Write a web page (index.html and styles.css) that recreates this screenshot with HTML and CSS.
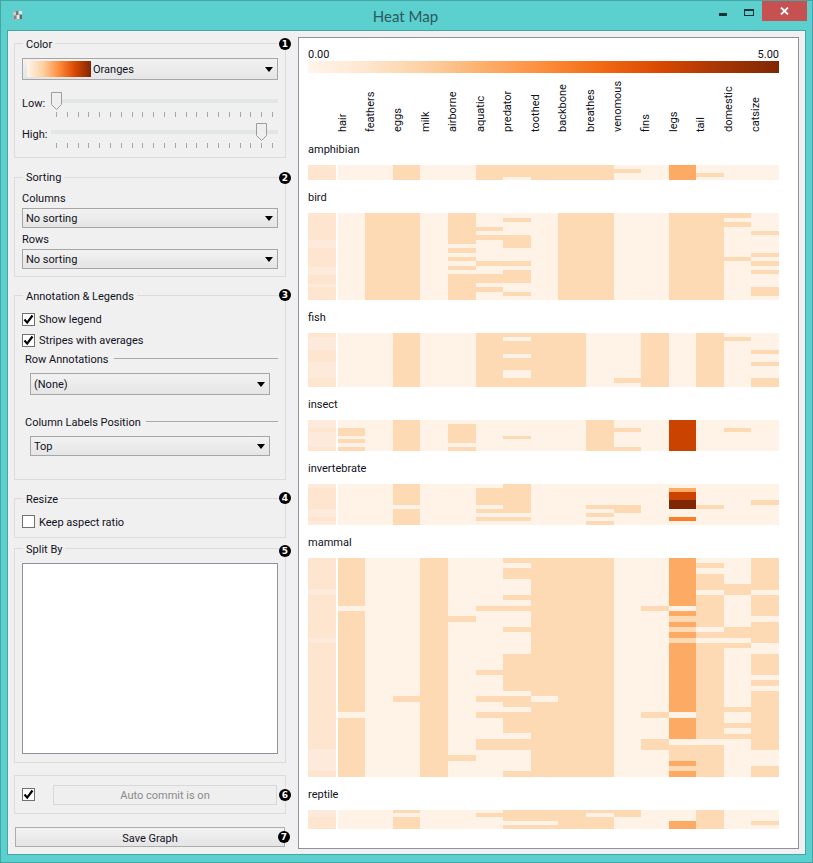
FILE: index.html
```html
<!DOCTYPE html>
<html lang="en">
<head>
<meta charset="utf-8">
<title>Heat Map</title>
<link rel="stylesheet" href="styles.css">
</head>
<body>
<div class="window">
  <header class="titlebar">
    <svg class="app-icon" width="11" height="11" viewBox="0 0 11 11" shape-rendering="crispEdges"><rect x="1" y="1" width="9" height="9" fill="#9fb0b0"/><rect x="1" y="2" width="3" height="3" fill="#c4cccc"/><rect x="4" y="1" width="2" height="4" fill="#6f7c7c"/><rect x="7" y="1" width="3" height="3" fill="#dfe6e6"/><rect x="2" y="6" width="2" height="3" fill="#7a8888"/><rect x="5" y="5" width="2" height="4" fill="#e6ecec"/><rect x="8" y="5" width="2" height="4" fill="#5f6b6b"/></svg>
    <div class="title">Heat Map</div>
    <div class="win-buttons">
      <div class="win-min"></div>
      <div class="win-max"></div>
      <div class="win-close"><svg width="9" height="8" viewBox="0 0 9 8"><path d="M1 0.5L8 7.5M8 0.5L1 7.5" stroke="#fff" stroke-width="1.8" fill="none"/></svg></div>
    </div>
  </header>
  <div class="content">
    <aside class="sidebar">
      <section class="box box-color">
        <div class="legend">Color</div>
        <span class="badge badge-a">1</span>
        <div class="combo combo-tall combo-first"><span class="swatch"></span><span class="combo-text">Oranges</span><i class="arrow"></i></div>
        <div class="slider-row slider-low">
          <label class="slider-label">Low:</label>
          <div class="slider"><div class="groove"></div><div class="ticks"></div>
            <svg class="handle handle-low" width="12" height="18" viewBox="0 0 12 18"><path d="M.5.5H10.5V12.5L5.5 17.5L.5 12.5Z" fill="#efefef" stroke="#9d9d9d"/></svg>
          </div>
        </div>
        <div class="slider-row slider-high">
          <label class="slider-label">High:</label>
          <div class="slider"><div class="groove"></div><div class="ticks"></div>
            <svg class="handle handle-high" width="12" height="18" viewBox="0 0 12 18"><path d="M.5.5H10.5V12.5L5.5 17.5L.5 12.5Z" fill="#efefef" stroke="#9d9d9d"/></svg>
          </div>
        </div>
      </section>

      <section class="box box-sorting">
        <div class="legend">Sorting</div>
        <span class="badge badge-a">2</span>
        <div class="field-label field-first">Columns</div>
        <div class="combo"><span class="combo-text">No sorting</span><i class="arrow"></i></div>
        <div class="field-label">Rows</div>
        <div class="combo"><span class="combo-text">No sorting</span><i class="arrow"></i></div>
      </section>

      <section class="box box-annot">
        <div class="legend">Annotation &amp; Legends</div>
        <span class="badge badge-b">3</span>
        <div class="check-row check-first"><span class="check"><svg width="11" height="11" viewBox="0 0 11 11"><path d="M1.5 5.5L4.2 8.6L9.5 1.5" stroke="#000" stroke-width="2.2" fill="none"/></svg></span>Show legend</div>
        <div class="check-row check-second"><span class="check"><svg width="11" height="11" viewBox="0 0 11 11"><path d="M1.5 5.5L4.2 8.6L9.5 1.5" stroke="#000" stroke-width="2.2" fill="none"/></svg></span>Stripes with averages</div>
        <div class="sub-head sub-first"><span>Row Annotations</span><i class="rule"></i></div>
        <div class="combo combo-tall combo-inset"><span class="combo-text">(None)</span><i class="arrow"></i></div>
        <div class="sub-head sub-second"><span>Column Labels Position</span><i class="rule"></i></div>
        <div class="combo combo-inset"><span class="combo-text">Top</span><i class="arrow"></i></div>
      </section>

      <section class="box box-resize">
        <div class="legend">Resize</div>
        <span class="badge badge-b">4</span>
        <div class="check-row check-first check-resize"><span class="check"></span>Keep aspect ratio</div>
      </section>

      <section class="box box-split">
        <div class="legend">Split By</div>
        <span class="badge badge-c">5</span>
        <div class="listbox"></div>
      </section>

      <section class="box box-auto">
        <span class="badge badge-d">6</span>
        <span class="check"><svg width="11" height="11" viewBox="0 0 11 11"><path d="M1.5 5.5L4.2 8.6L9.5 1.5" stroke="#000" stroke-width="2.2" fill="none"/></svg></span>
        <div class="btn-disabled">Auto commit is on</div>
      </section>

      <div class="save-wrap">
        <div class="btn-save">Save Graph</div>
        <span class="badge badge-e">7</span>
      </div>
    </aside>

    <main class="pane">
      <div class="scale-text"><span>0.00</span><span>5.00</span></div>
      <div class="scale-bar"></div>
      <div class="col-labels">
        <span>hair</span><span>feathers</span><span>eggs</span><span>milk</span><span>airborne</span><span>aquatic</span><span>predator</span><span>toothed</span><span>backbone</span><span>breathes</span><span>venomous</span><span>fins</span><span>legs</span><span>tail</span><span>domestic</span><span>catsize</span>
      </div>

      <div class="group-label">amphibian</div>
      <svg class="map" width="471" height="15" viewBox="0 0 471 15" shape-rendering="crispEdges">
        <path class="s" d="M0 0H28V15H0Z"/>
        <path class="b" d="M30 0H471V15H30Z"/>
        <path class="m" d="M85 0H112V15H85Z M168 0H195V15H168Z M195 0H223V12H195Z M223 0H306V15H223Z M306 4H333V8H306Z M388 8H416V12H388Z"/>
        <path class="o" d="M361 0H388V15H361Z"/>
      </svg>

      <div class="group-label">bird</div>
      <svg class="map" width="471" height="87" viewBox="0 0 471 87" shape-rendering="crispEdges">
        <path class="s" d="M0 0H28V87H0Z"/>
        <path class="t" d="M0 27H28V35H0Z M0 54H28V62H0Z M0 71H28V74H0Z"/>
        <path class="b" d="M30 0H471V87H30Z"/>
        <path class="m" d="M57 0H112V87H57Z
          M140 0H168V31H140Z M140 35H168V40H140Z M140 44H168V48H140Z M140 53H168V57H140Z M140 61H168V87H140Z
          M168 14H195V18H168Z M168 22H195V27H168Z M168 48H195V53H168Z M168 61H195V70H168Z M168 74H195V79H168Z
          M195 5H223V9H195Z M195 22H223V35H195Z M195 48H223V53H195Z M195 57H223V70H195Z M195 79H223V83H195Z
          M250 0H306V87H250Z M361 0H416V87H361Z
          M416 0H443V5H416Z M416 9H443V14H416Z M416 44H443V48H416Z
          M443 18H471V22H443Z M443 40H471V44H443Z M443 48H471V53H443Z M443 57H471V61H443Z M443 74H471V83H443Z"/>
      </svg>

      <div class="group-label">fish</div>
      <svg class="map" width="471" height="54" viewBox="0 0 471 54" shape-rendering="crispEdges">
        <path class="s" d="M0 0H28V54H0Z"/>
        <path class="t" d="M0 4H28V17H0Z M0 29H28V45H0Z"/>
        <path class="b" d="M30 0H471V54H30Z"/>
        <path class="m" d="M85 0H112V54H85Z
          M168 0H195V54H168Z M195 0H223V4H195Z M195 8H223V21H195Z M195 25H223V37H195Z M195 45H223V54H195Z M223 0H278V54H223Z
          M306 45H333V50H306Z M333 0H361V54H333Z M388 0H416V54H388Z M416 4H443V8H416Z
          M443 17H471V21H443Z M443 29H471V33H443Z M443 45H471V54H443Z"/>
      </svg>

      <div class="group-label">insect</div>
      <svg class="map" width="471" height="31" viewBox="0 0 471 31" shape-rendering="crispEdges">
        <path class="s" d="M0 0H28V31H0Z"/>
        <path class="t" d="M0 0H28V8H0Z M0 12H28V27H0Z"/>
        <path class="b" d="M30 0H471V31H30Z"/>
        <path class="m" d="M30 8H57V16H30Z M30 19H57V23H30Z M30 27H57V31H30Z M85 0H112V31H85Z
          M140 4H168V23H140Z M140 27H168V31H140Z M195 16H223V19H195Z M278 0H306V31H278Z
          M306 8H333V12H306Z M306 27H333V31H306Z M416 8H443V12H416Z"/>
        <path class="d" d="M361 0H388V31H361Z"/>
      </svg>

      <div class="group-label">invertebrate</div>
      <svg class="map" width="471" height="41" viewBox="0 0 471 41" shape-rendering="crispEdges">
        <path class="s" d="M0 0H28V41H0Z"/>
        <path class="t" d="M0 0H28V4H0Z M0 25H28V33H0Z M0 37H28V41H0Z"/>
        <path class="b" d="M30 0H471V41H30Z"/>
        <path class="m" d="M85 0H112V21H85Z M85 25H112V41H85Z
          M168 4H195V21H168Z M168 25H195V29H168Z M168 33H195V37H168Z
          M195 0H223V29H195Z M195 33H223V37H195Z
          M278 21H306V25H278Z M278 29H306V33H278Z M278 37H306V41H278Z M306 21H333V29H306Z
          M388 21H416V25H388Z M443 16H471V21H443Z"/>
        <path class="o" d="M361 4H388V8H361Z"/>
        <path class="d" d="M361 8H388V16H361Z"/>
        <path class="k" d="M361 16H388V25H361Z"/>
        <path class="e" d="M361 33H388V37H361Z"/>
      </svg>

      <div class="group-label">mammal</div>
      <svg class="map" width="471" height="219" viewBox="0 0 471 219" shape-rendering="crispEdges">
        <path class="s" d="M0 0H28V219H0Z"/>
        <path class="t" d="M0 31H28V37H0Z M0 80H28V85H0Z M0 191H28V213H0Z"/>
        <path class="b" d="M30 0H471V219H30Z"/>
        <path class="m" d="M30 0H57V48H30Z M30 53H57V154H30Z M30 160H57V219H30Z
          M85 138H112V144H85Z M112 0H140V219H112Z
          M140 58H168V64H140Z M140 197H168V203H140Z
          M168 48H195V53H168Z M168 112H195V117H168Z M168 138H195V144H168Z M168 154H195V160H168Z M168 181H195V192H168Z
          M195 0H223V5H195Z M195 10H223V21H195Z M195 37H223V42H195Z M195 48H223V53H195Z M195 69H223V74H195Z M195 96H223V133H195Z M195 138H223V149H195Z M195 154H223V175H195Z M195 181H223V192H195Z M195 213H223V219H195Z
          M223 0H250V138H223Z M223 144H250V219H223Z M250 0H306V219H250Z
          M333 48H361V53H333Z M333 154H361V160H333Z M333 181H361V192H333Z
          M361 58H388V64H361Z M361 69H388V74H361Z M361 80H388V85H361Z M361 187H388V203H361Z M361 208H388V213H361Z
          M388 5H416V10H388Z M388 16H416V32H388Z M388 37H416V69H388Z M388 74H416V80H388Z M388 85H416V181H388Z M388 187H416V219H388Z
          M416 26H443V37H416Z M416 69H443V80H416Z M416 85H443V90H416Z M416 149H443V154H416Z M416 165H443V170H416Z M416 176H443V181H416Z
          M443 0H471V32H443Z M443 37H471V58H443Z M443 64H471V85H443Z M443 96H471V117H443Z M443 122H471V128H443Z M443 133H471V192H443Z M443 208H471V219H443Z"/>
        <path class="o" d="M361 0H388V48H361Z M361 53H388V58H361Z M361 64H388V69H361Z M361 74H388V80H361Z M361 85H388V154H361Z M361 160H388V181H361Z M361 203H388V208H361Z M361 213H388V219H361Z"/>
      </svg>

      <div class="group-label">reptile</div>
      <svg class="map" width="471" height="19" viewBox="0 0 471 19" shape-rendering="crispEdges">
        <path class="s" d="M0 0H28V19H0Z"/>
        <path class="t" d="M0 0H28V7H0Z"/>
        <path class="b" d="M30 0H471V19H30Z"/>
        <path class="m" d="M85 0H112V3H85Z M85 7H112V19H85Z M168 3H195V7H168Z
          M195 0H250V11H195Z M195 15H250V19H195Z M250 0H278V19H250Z
          M278 0H306V3H278Z M278 7H306V19H278Z M306 0H333V7H306Z
          M388 0H416V19H388Z M443 11H471V15H443Z"/>
        <path class="o" d="M361 11H388V19H361Z"/>
      </svg>
    </main>
  </div>
</div>
</body>
</html>
```
FILE: styles.css
```css
* { box-sizing: border-box; }

html, body {
  margin: 0;
  padding: 0;
}

body {
  width: 813px;
  height: 863px;
  overflow: hidden;
  font-family: "Roboto", "Liberation Sans", sans-serif;
  font-size: 11px;
  color: #111122;
}

.window {
  width: 813px;
  height: 863px;
  background: #5ccfcf;
  border: 1px solid #45a5a5;
  padding: 0 6px 7px;
  display: flex;
  flex-direction: column;
}

.titlebar {
  height: 29px;
  position: relative;
  flex: none;
}

.app-icon {
  position: absolute;
  left: 5px;
  top: 9px;
}

.title {
  text-align: center;
  font-family: "Lato", sans-serif;
  font-size: 15px;
  line-height: 31px;
  color: #2c5a5c;
  padding-right: 2px;
}

.win-buttons {
  position: absolute;
  right: -1px;
  top: 0;
  display: flex;
}

.win-min {
  width: 8px;
  height: 3px;
  background: #1d3434;
  margin: 12px 17px 0 0;
}

.win-max {
  width: 10px;
  height: 7px;
  border: 1px solid #1d3434;
  border-top-width: 2px;
  margin: 8px 8px 0 0;
}

.win-close {
  width: 45px;
  height: 20px;
  background: #c75050;
  display: flex;
  align-items: center;
  justify-content: center;
}

.content {
  flex: 1;
  min-height: 0;
  background: #f0f0f0;
  border: 1px solid #45a5a5;
  padding: 6px 0 0 6px;
  display: flex;
}

.sidebar {
  width: 272px;
  flex: none;
  padding-top: 6px;
}

.box {
  position: relative;
  border: 1px solid #dcdcdc;
  padding: 0 7px;
}

.legend {
  width: max-content;
  height: 16px;
  line-height: 17px;
  margin: -8px 0 0 1px;
  padding: 0 3px;
  background: #f0f0f0;
}

.box-sorting .legend { line-height: 15px; }

.box-color { padding-bottom: 9px; }
.box-sorting { margin-top: 19px; padding-bottom: 7px; }
.box-annot { margin-top: 18px; padding-bottom: 23px; }
.box-resize { margin-top: 18px; padding-bottom: 9px; }
.box-split { margin-top: 10px; padding-bottom: 8px; }

.box-auto {
  margin-top: 12px;
  height: 39px;
  display: flex;
  align-items: center;
  gap: 18px;
}

.badge {
  position: absolute;
  left: 264px;
  width: 12px;
  height: 12px;
  border-radius: 50%;
  background: #000;
  color: #fff;
  font: bold 9px/12px "DejaVu Sans", sans-serif;
  text-align: center;
}

.badge-a { top: -6px; }
.badge-b { top: -7px; }
.badge-c { top: -4px; }
.badge-d { top: 13px; }
.badge-e { top: 4px; left: 264px; }

.combo {
  height: 20px;
  line-height: 17px;
  border: 1px solid #a6a6a6;
  background: linear-gradient(#f2f2f2, #e5e5e5);
  display: flex;
  align-items: center;
  padding-left: 3px;
  position: relative;
}

.combo-tall { height: 22px; }
.combo-first { margin-top: 6px; padding-left: 4px; }
.combo-inset { margin: 6px 8px 0; }

.combo-text { flex: 1; }

.swatch {
  width: 64px;
  height: 16px;
  margin-right: 2px;
  background: linear-gradient(90deg, #fff5eb, #fdd0a2 25%, #fd8d3c 50%, #d94801 75%, #7f2704);
}

.arrow {
  width: 0;
  height: 0;
  margin-right: 4px;
  border-left: 4px solid transparent;
  border-right: 4px solid transparent;
  border-top: 5px solid #000;
}

.slider-row {
  display: flex;
}

.slider-low { margin-top: 12px; }
.slider-high { margin-top: 6px; }

.slider-label {
  width: 29px;
  height: 22px;
  line-height: 24px;
  flex: none;
}

.slider {
  flex: 1;
  height: 25px;
  position: relative;
}

.groove {
  height: 4px;
  margin-top: 7px;
  background: #e2e6e4;
}

.ticks {
  height: 5px;
  margin: 9px 5px 0;
  background: repeating-linear-gradient(90deg, #a8a59b 0 1px, transparent 1px 10.8px);
}

.handle {
  position: absolute;
  top: 0;
}

.handle-low { left: 0; }
.handle-high { left: 205px; }

.field-label {
  height: 16px;
  line-height: 18px;
  margin: 3px 0 2px;
}

.field-first { margin-top: 4px; }

.check-row {
  display: flex;
  align-items: center;
  gap: 4px;
  height: 13px;
}

.check-first { margin-top: 9px; }
.check-second { margin-top: 8px; }
.check-resize {
  margin-top: 8px;
  align-items: flex-start;
  line-height: 15px;
}

.check {
  width: 13px;
  height: 13px;
  flex: none;
  background: #fff;
  border: 1px solid #707070;
  display: flex;
}

.sub-head {
  height: 16px;
  line-height: 18px;
  padding-left: 3px;
  display: flex;
  align-items: flex-start;
  gap: 5px;
}

.sub-first { margin-top: 4px; }
.sub-second { margin-top: 19px; }

.rule {
  flex: 1;
  height: 1px;
  margin-top: 7px;
  background: #a9a9a9;
}

.listbox {
  height: 191px;
  margin-top: 6px;
  background: #fff;
  border: 1px solid #8f8f9d;
}

.btn-disabled {
  width: 224px;
  height: 20px;
  border: 1px solid #d8d8d8;
  background: #efefef;
  color: #8a8a8a;
  text-align: center;
  line-height: 20px;
}

.save-wrap {
  position: relative;
  margin-top: 13px;
}

.btn-save {
  height: 20px;
  margin-left: 1px;
  width: 270px;
  border: 1px solid #adadad;
  background: linear-gradient(#f2f2f2, #e5e5e5);
  text-align: center;
  line-height: 22px;
}

.pane {
  width: 501px;
  height: 812px;
  margin-left: 12px;
  background: #fff;
  border: 1px solid #8f8f9d;
  padding: 10px 0 0 9px;
}

.scale-text {
  width: 471px;
  height: 13px;
  line-height: 13px;
  display: flex;
  justify-content: space-between;
}

.scale-bar {
  width: 471px;
  height: 12px;
  background: linear-gradient(90deg, #fff5eb, #fee6ce 12.5%, #fdd0a2 25%, #fdae6b 37.5%, #fd8d3c 50%, #f16913 62.5%, #d94801 75%, #a63603 87.5%, #7f2704);
}

.col-labels {
  height: 59px;
  margin-left: 30px;
  width: 441px;
  display: grid;
  grid-template-columns: repeat(16, 27.56px);
}

.col-labels span {
  writing-mode: vertical-rl;
  transform: rotate(180deg);
  line-height: 14px;
  width: 14px;
  text-align: left;
  justify-self: start;
  margin-left: -2px;
}

.group-label {
  height: 33px;
  line-height: 36px;
  color: #111122;
}

.map { display: block; }

.s { fill: #fee5cf; }
.t { fill: #feeadb; }
.b { fill: #fff3e8; }
.m { fill: #fdd9b4; }
.o { fill: #fdaa65; }
.e { fill: #f87d26; }
.d { fill: #cb4301; }
.k { fill: #7f2704; }
```
